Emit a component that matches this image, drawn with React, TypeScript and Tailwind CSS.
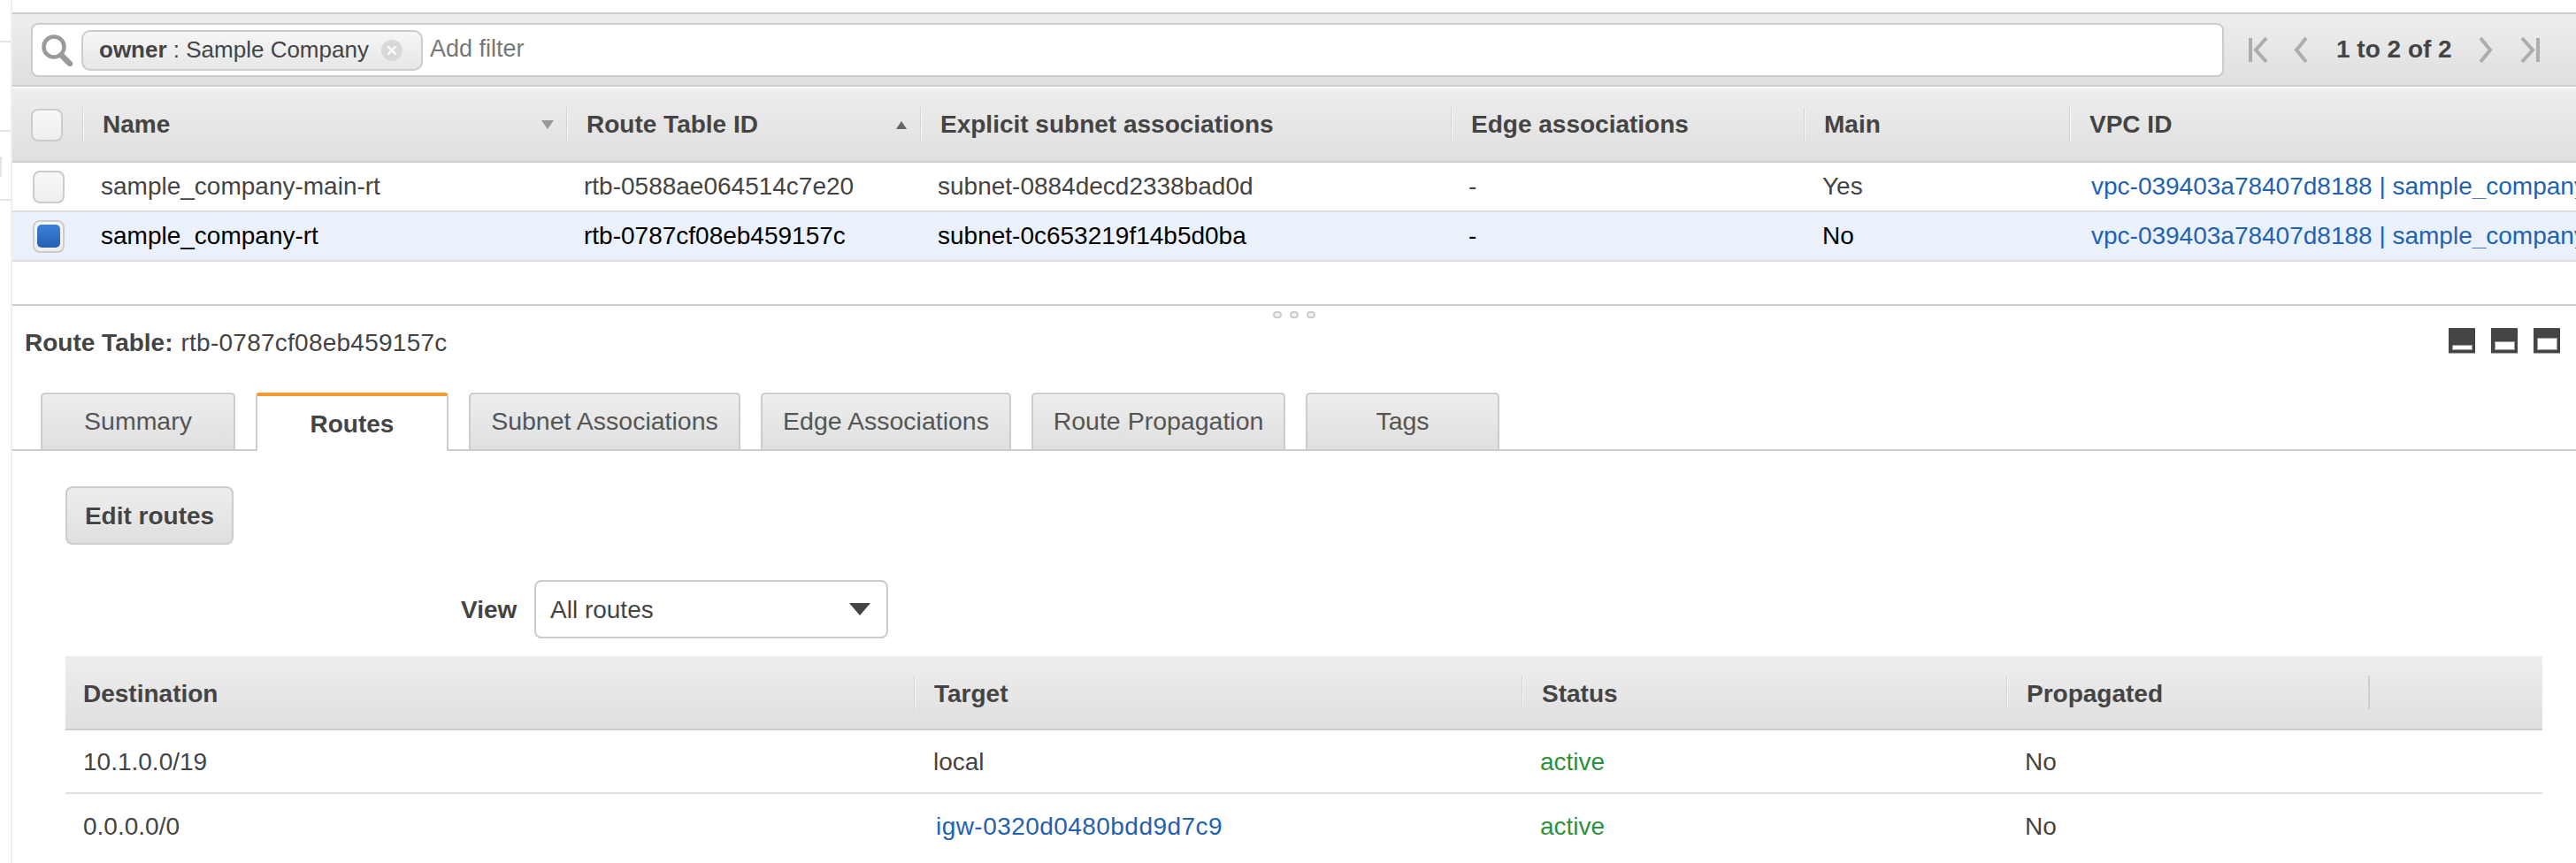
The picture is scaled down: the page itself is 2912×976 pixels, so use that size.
const FONT = "[font-family:'Liberation_Sans',Arial,sans-serif]";
const headGrad = "bg-gradient-to-b from-[#eeeeee] to-[#dfdfdf]";

function Sep({ className = "bg-[#f7f7f7] border-l border-[#d4d4d4]" }: { className?: string }) {
  return <div className={`w-[2px] h-[38px] shrink-0 ${className}`} />;
}

function HeadCell({ label, caret, pad = "pl-[21px]" }: { label: string; caret?: "down" | "up"; pad?: string }) {
  return (
    <div className="flex items-center min-w-0">
      <Sep />
      <span className={`${pad} font-bold text-[#444444] whitespace-nowrap`}>{label}</span>
      <span className="flex-1" />
      {caret === "down" && (
        <svg width="14" height="10" viewBox="0 0 14 10" className="mr-[14px] -ml-[30px] shrink-0"><path d="M0 0h14L7 10z" fill="#999999" /></svg>
      )}
      {caret === "up" && (
        <svg width="12" height="9" viewBox="0 0 12 9" className="mr-[15px] -ml-[30px] shrink-0"><path d="M0 9h12L6 0z" fill="#666666" /></svg>
      )}
    </div>
  );
}

function Checkbox({ checked, className }: { checked?: boolean; className: string }) {
  return (
    <div className={`w-[36px] h-[37px] rounded-[8px] border-2 border-[#cccccc] bg-gradient-to-b from-[#f8f8f8] to-[#eeeeee] flex items-center justify-center ${className}`}>
      {checked && <div className="w-[26px] h-[26px] rounded-[5px] bg-gradient-to-b from-[#3d80dc] to-[#2460b2]" />}
    </div>
  );
}

const columns = "grid grid-cols-[79px_547px_400px_600px_399px_300px_minmax(0,1fr)]";

function Row({ name, rtb, subnet, main, selected }: { name: string; rtb: string; subnet: string; main: string; selected?: boolean }) {
  return (
    <div className={`${columns} h-[56px] items-center border-b-2 border-[#dddddd] ${selected ? "bg-[#eaf1fb] text-black" : "text-[#444444]"}`}>
      <Checkbox checked={selected} className="ml-[23px]" />
      <div className="pl-[21px]">{name}</div>
      <div className="pl-[20px]">{rtb}</div>
      <div className="pl-[20px]">{subnet}</div>
      <div className="pl-[20px]">-</div>
      <div className="pl-[21px]">{main}</div>
      <div className="pl-[25px] text-[#2262b4] whitespace-nowrap overflow-hidden">vpc-039403a78407d8188 | sample_company-vpc</div>
    </div>
  );
}

function Pager({ d, w }: { d: string; w: number }) {
  return (
    <svg width={w} height="30" viewBox={`0 0 ${w} 30`} fill="none" stroke="#adadad" strokeWidth="4" className="shrink-0">
      <path d={d} />
    </svg>
  );
}

function LayoutIcon({ inner }: { inner: string }) {
  return (
    <div className="w-[30px] h-[29px] bg-[#444444] border-b border-[#aaaaaa] flex items-end justify-center pb-[3px]">
      <div className={`w-[23px] bg-white border border-[#999999] ${inner}`} />
    </div>
  );
}

function Tab({ label, className, active }: { label: string; className: string; active?: boolean }) {
  if (active) {
    return (
      <div className={`h-[66px] -mb-[2px] shrink-0 bg-white border-x-2 border-[#cccccc] border-t-[4px] border-t-[#f49a2e] rounded-t-[4px] flex items-center justify-center pt-[2px] font-bold text-[#444444] ${className}`}>
        {label}
      </div>
    );
  }
  return (
    <div className={`h-[64px] shrink-0 ${headGrad} border-2 border-b-0 border-[#cccccc] rounded-t-[5px] flex items-center justify-center pb-[1px] text-[28.5px] text-[#555555] ${className}`}>
      {label}
    </div>
  );
}

const routeCols = "grid grid-cols-[959px_687px_548px_409px_minmax(0,1fr)]";

function RouteRow({ dest, target, link }: { dest: string; target: string; link?: boolean }) {
  return (
    <div className={`${routeCols} h-[72px] pt-[2px] items-center border-b-2 border-[#e0e0e0] last:border-b-0 text-[#444444]`}>
      <div className="pl-[20px]">{dest}</div>
      <div className={link ? "pl-[25px] text-[#2262b4] tracking-[0.45px]" : "pl-[22px]"}>{target}</div>
      <div className="pl-[21px] text-[#2f9039]">active</div>
      <div className="pl-[21px]">No</div>
      <div />
    </div>
  );
}

export default function App() {
  return (
    <div className={`w-[2912px] h-[976px] overflow-hidden bg-white flex text-[28px] leading-none ${FONT}`}>
      {/* left gutter */}
      <div className="w-[14px] shrink-0 border-r-2 border-[#efefef] flex flex-col">
        <div className="h-[48px] border-b-2 border-[#e4e4e4]" />
        <div className="h-[101px] border-b-2 border-[#e4e4e4]" />
        <div className="w-[2px] h-[23px] mt-[28px] bg-[#e4e4e4]" />
        <div className="h-[27px] border-b-2 border-[#e4e4e4]" />
      </div>

      <div className="flex-1 min-w-0 flex flex-col">
        {/* filter bar */}
        <div className={`mt-[14px] h-[84px] ${headGrad} border-y-2 border-[#cccccc] flex items-center`}>
          <div className="ml-[21px] w-[2479px] h-[61px] shrink-0 mt-[1px] bg-white border-2 border-[#cccccc] rounded-[8px] flex items-center">
            <svg width="36" height="36" viewBox="0 0 36 36" className="ml-[10px] shrink-0" fill="none" stroke="#9a9a9a">
              <circle cx="14" cy="14" r="11.5" strokeWidth="4.5" />
              <path d="M23 24l9 9" strokeWidth="6.5" strokeLinecap="round" />
            </svg>
            <div className="ml-[9px] w-[386px] h-[46px] shrink-0 rounded-[10px] border-2 border-[#cccccc] bg-gradient-to-b from-[#f6f6f6] to-[#e7e7e7] flex items-center pl-[18px] text-[26px] text-[#444444]">
              <span className="whitespace-nowrap pb-[2px]"><b>owner</b> : Sample Company</span>
              <span className="ml-[14px] w-[24px] h-[24px] rounded-full bg-[#d8d8d8] flex items-center justify-center shrink-0">
                <svg width="12" height="12" viewBox="0 0 12 12" stroke="#ffffff" strokeWidth="2.4"><path d="M1.5 1.5l9 9M10.5 1.5l-9 9" /></svg>
              </span>
            </div>
            <span className="ml-[8px] pb-[2px] text-[27px] text-[#777777]">Add filter</span>
          </div>
          <div className="ml-[28px] flex items-center text-[#444444]">
            <Pager w={22} d="M2 2v27M20 2L8 15.5 20 29" />
            <div className="w-[29px]" />
            <Pager w={16} d="M14 2L3 15.5 14 29" />
            <span className="ml-[32px] font-bold whitespace-nowrap">1 to 2 of 2</span>
            <div className="w-[30px]" />
            <Pager w={16} d="M2 2l11 13.5L2 29" />
            <div className="w-[31px]" />
            <Pager w={22} d="M20 2v27M2 2l12 13.5L2 29" />
          </div>
        </div>

        {/* table header */}
        <div className={`${columns} mt-[2px] h-[84px] ${headGrad} border-b-2 border-[#cccccc] items-center`}>
          <div className="flex items-center">
            <Checkbox className="ml-[21px]" />
            <div className="flex-1" />
          </div>
          <HeadCell label="Name" caret="down" />
          <HeadCell label="Route Table ID" caret="up" />
          <HeadCell label="Explicit subnet associations" />
          <HeadCell label="Edge associations" />
          <HeadCell label="Main" />
          <HeadCell label="VPC ID" />
        </div>

        <Row name="sample_company-main-rt" rtb="rtb-0588ae064514c7e20" subnet="subnet-0884decd2338bad0d" main="Yes" />
        <Row name="sample_company-rt" rtb="rtb-0787cf08eb459157c" subnet="subnet-0c653219f14b5d0ba" main="No" selected />

        {/* detail panel */}
        <div className="mt-[48px] border-t-2 border-[#cccccc] flex flex-col">
          <div className="flex justify-center gap-[9px] mt-[6px] h-[8px]">
            <span className="w-[10px] h-[8px] rounded-full border-2 border-[#cccccc] bg-[#f2f2f2]" />
            <span className="w-[10px] h-[8px] rounded-full border-2 border-[#cccccc] bg-[#f2f2f2]" />
            <span className="w-[10px] h-[8px] rounded-full border-2 border-[#cccccc] bg-[#f2f2f2]" />
          </div>

          <div className="mt-[10px] h-[30px] flex items-center pl-[14px] pr-[18px] text-[#444444]">
            <b className="whitespace-nowrap pt-[6px]">Route Table:</b>
            <span className="ml-[9px] pt-[6px] tracking-[0.25px]">rtb-0787cf08eb459157c</span>
            <div className="flex-1" />
            <div className="flex gap-[18px]">
              <LayoutIcon inner="h-[6px]" />
              <LayoutIcon inner="h-[10px]" />
              <LayoutIcon inner="h-[14px]" />
            </div>
          </div>

          <div className="mt-[44px] h-[66px] border-b-2 border-[#cccccc] flex items-start pl-[32px] gap-[23px]">
            <Tab label="Summary" className="w-[220px]" />
            <Tab label="Routes" className="w-[218px]" active />
            <Tab label="Subnet Associations" className="w-[307px]" />
            <Tab label="Edge Associations" className="w-[283px]" />
            <Tab label="Route Propagation" className="w-[287px]" />
            <Tab label="Tags" className="w-[219px]" />
          </div>

          <div className="pl-[60px] pr-[38px] flex flex-col">
            <div className={`mt-[40px] w-[190px] h-[66px] rounded-[8px] border-2 border-[#cccccc] ${headGrad} flex items-center justify-center pt-[2px] font-bold text-[#444444] [text-shadow:0_1px_0_#ffffff]`}>
              Edit routes
            </div>

            <div className="mt-[40px] flex items-center h-[66px]">
              <b className="ml-[447px] w-[62px] pt-[1px] text-[#444444]">View</b>
              <div className="ml-[21px] w-[400px] h-[66px] rounded-[8px] border-2 border-[#cccccc] bg-white flex items-center pl-[16px] pr-[18px] text-[#444444]">
                <span className="pt-[1px]">All routes</span>
                <span className="flex-1" />
                <svg width="24" height="14" viewBox="0 0 24 14"><path d="M0 0h24L12 14z" fill="#444444" /></svg>
              </div>
            </div>

            {/* routes table */}
            <div className="mt-[20px]">
              <div className={`${routeCols} h-[84px] ${headGrad} border-b-2 border-[#cccccc] items-center`}>
                <div className="pl-[20px] pt-[3px] font-bold text-[#444444]">Destination</div>
                <HeadCell label="Target" pad="pl-[21px] pt-[3px]" />
                <HeadCell label="Status" pad="pl-[21px] pt-[3px]" />
                <HeadCell label="Propagated" pad="pl-[21px] pt-[3px]" />
                <div><Sep className="bg-[#cfcfcf]" /></div>
              </div>
              <RouteRow dest="10.1.0.0/19" target="local" />
              <RouteRow dest="0.0.0.0/0" target="igw-0320d0480bdd9d7c9" link />
            </div>
          </div>
        </div>
      </div>
    </div>
  );
}
